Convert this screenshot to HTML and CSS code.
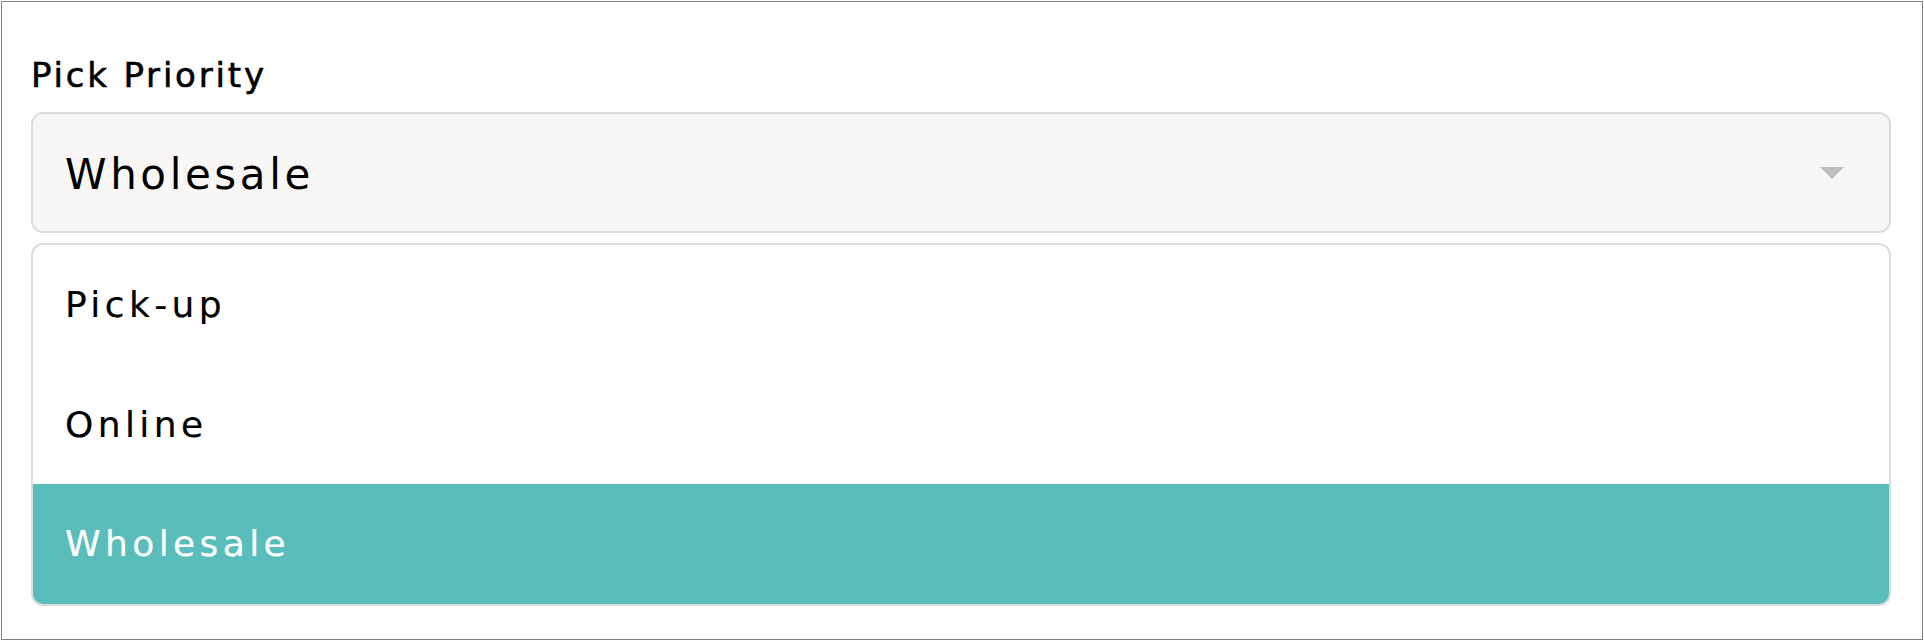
FILE: index.html
```html
<!DOCTYPE html>
<html lang="en">
<head>
<meta charset="utf-8">
<title>Pick Priority</title>
<link rel="stylesheet" href="styles.css">
</head>
<body>
<div class="frame">
  <div class="field">
    <label class="field-label">Pick Priority</label>
    <div class="select">
      <span class="select-value">Wholesale</span>
      <svg class="select-arrow" width="24" height="12" viewBox="0 0 24 12"><path d="M0 0 H24 L12 12 Z" fill="#bdbdbd"/></svg>
    </div>
    <ul class="menu">
      <li class="menu-item">Pick-up</li>
      <li class="menu-item">Online</li>
      <li class="menu-item is-active">Wholesale</li>
    </ul>
  </div>
</div>
</body>
</html>
```

FILE: styles.css
```css
html, body {
  margin: 0;
  padding: 0;
  background: #ffffff;
}
body {
  padding: 1px;
  font-family: "DejaVu Sans", "Open Sans", sans-serif;
  color: #000;
}
.frame {
  box-sizing: border-box;
  height: 639px;
  border: 1px solid #808080;
  padding: 53px 31px 0 29px;
}
.field {
  display: flex;
  flex-direction: column;
}
.field-label {
  display: block;
  font-size: 34px;
  line-height: 40px;
  letter-spacing: 2.8px;
  -webkit-text-stroke: 0.6px #000;
  margin-bottom: 17px;
}
.select {
  box-sizing: border-box;
  height: 121px;
  display: flex;
  align-items: center;
  justify-content: space-between;
  background: #f8f7f5;
  border: 2px solid #dcdcdc;
  border-radius: 12px;
  padding: 0 45px 0 32px;
}
.select-value {
  font-size: 42px;
  letter-spacing: 3.6px;
  margin-top: 3px;
}
.select-arrow {
  display: block;
  margin-top: 0;
}
.menu {
  list-style: none;
  margin: 10px 0 0 0;
  padding: 0;
  border: 2px solid #dcdcdc;
  border-radius: 12px;
  overflow: hidden;
  background: #fff;
}
.menu-item {
  height: 119.5px;
  display: flex;
  align-items: center;
  padding-left: 32px;
  font-size: 36px;
  letter-spacing: 4.4px;
  -webkit-text-stroke: 0.2px currentColor;
}
.menu-item.is-active {
  background: #59bdbc;
  color: #fff;
}
```
